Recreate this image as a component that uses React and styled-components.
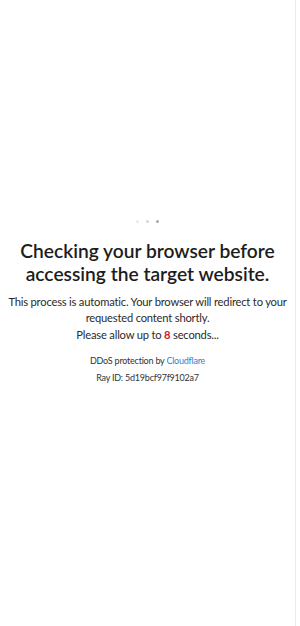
import React from 'react';
import styled, { createGlobalStyle } from 'styled-components';

const GlobalStyle = createGlobalStyle`
  html, body {
    margin: 0;
    padding: 0;
    background: #ffffff;
  }
`;

const Page = styled.div`
  width: 296px;
  min-height: 626px;
  border-right: 1px solid #f4e6ef;
  box-sizing: border-box;
  font-family: Lato, 'Open Sans', sans-serif;
  color: #222;
  text-align: center;
  padding-top: 217px;
`;

const Dots = styled.div`
  display: flex;
  justify-content: center;
  gap: 7px;
  height: 8px;
  align-items: center;
`;

const Dot = styled.span`
  width: 3px;
  height: 3px;
  border-radius: 50%;
  background: ${(p) => p.$tone};
`;

const Title = styled.h1`
  font-size: 19.2px;
  font-weight: 600;
  line-height: 23.5px;
  margin: 13.5px 0 0;
  color: #1d1d1d;
`;

const Text = styled.p`
  font-size: 11.2px;
  line-height: 16.5px;
  margin: 8px 0 0;
  color: #2b2b2b;
  letter-spacing: -0.2px;
`;

const Seconds = styled.span`
  color: #d0222c;
  font-weight: 700;
`;

const Small = styled.div`
  font-size: 9px;
  line-height: 17px;
  margin-top: 9px;
  color: #333;
  letter-spacing: -0.22px;
`;

const Link = styled.a`
  color: #2f7fd6;
  text-decoration: none;
`;

export default function App() {
  return (
    <>
      <GlobalStyle />
      <Page>
        <Dots>
          <Dot $tone="#e8e8e8" />
          <Dot $tone="#d6d6d6" />
          <Dot $tone="#a9a9a9" />
        </Dots>
        <Title>
          Checking your browser before
          <br />
          accessing the target website.
        </Title>
        <Text>
          This process is automatic. Your browser will redirect to your requested content shortly.
          <br />
          Please allow up to <Seconds>8</Seconds> seconds...
        </Text>
        <Small>
          <div>
            DDoS protection by <Link href="#">Cloudflare</Link>
          </div>
          <div>Ray ID: 5d19bcf97f9102a7</div>
        </Small>
      </Page>
    </>
  );
}
